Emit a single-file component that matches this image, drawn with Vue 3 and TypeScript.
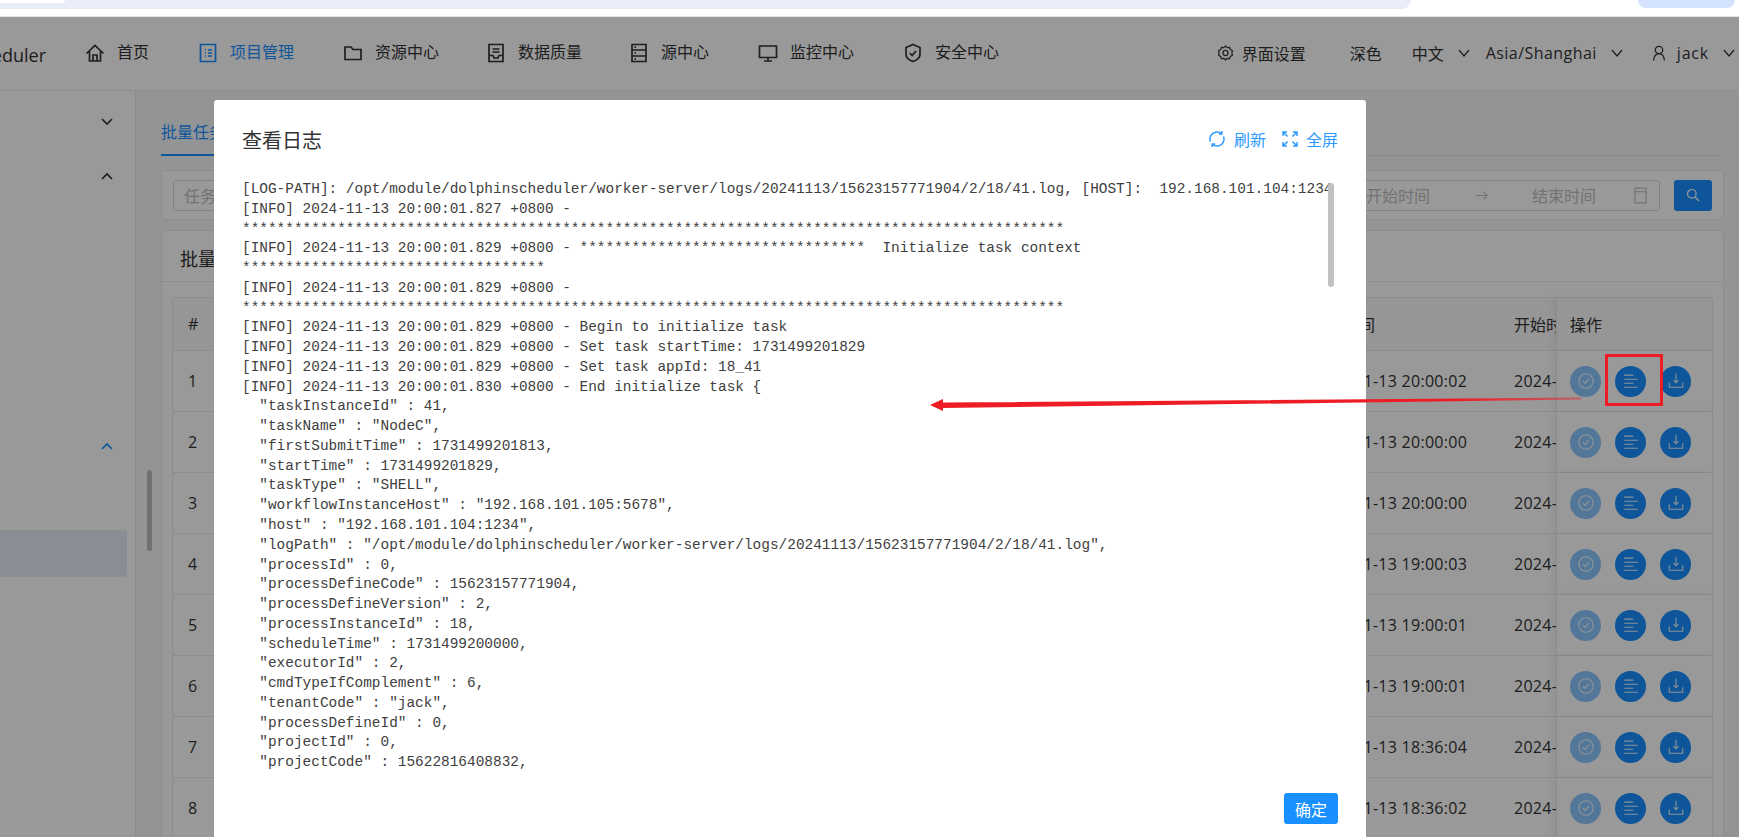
<script setup lang="ts">
interface NavItem { label: string; active?: boolean; tight?: boolean; d: string }

const navItems: NavItem[] = [
  { label: '首页', d: 'M1.500 10.500 10 2.500l8.500 8M4.500 8.500V18h11V8.500M8 18v-6h4v6' },
  { label: '项目管理', active: true, d: 'M2.500 1.500h15v17h-15zM7 7h1M7 10h1M7 13h1M10 7h4M10 10h4M10 13h4' },
  { label: '资源中心', d: 'M2 4h6l2 2.500h8V16.500H2z' },
  { label: '数据质量', tight: true, d: 'M3 1.500h14v17H3zM6.500 6h7M6.500 9h7M3 12.500h4l1 2.500h4l1-2.500h4' },
  { label: '源中心', tight: true, d: 'M3 1.500h14v17H3zM3 7h14M3 13h14M5.500 4.200h1.500M5.500 10h1.500M5.500 15.800h1.500' },
  { label: '监控中心', d: 'M1.500 3h17v11.500h-17zM10 14.500V18M6 18h8' },
  { label: '安全中心', d: 'M10 1.500l7 3v7c0 3.500-3 5.500-7 7-4-1.500-7-3.500-7-7v-7zM6.800 10l2.300 2.500 4-4.500' }
]

const dates = ['20:00:02', '20:00:00', '20:00:00', '19:00:03', '19:00:01', '19:00:01', '18:36:04', '18:36:02']
const rows = dates.map((t, i) => ({ no: i + 1, end: `2024-11-13 ${t}`, start: `2024-11-13 ${t}` }))

const menuRows = [false, true, false, false, false, false, true]
const chevronRows = [0, 1, 6]

const s95 = '*'.repeat(95)
const prefix = '[INFO] 2024-11-13 20:00:01.829 +0800 - '
const logText = [
  '[LOG-PATH]: /opt/module/dolphinscheduler/worker-server/logs/20241113/15623157771904/2/18/41.log, [HOST]:  192.168.101.104:1234',
  '[INFO] 2024-11-13 20:00:01.827 +0800 - ',
  s95,
  prefix + '*'.repeat(33) + '  Initialize task context',
  '*'.repeat(35),
  prefix,
  s95,
  prefix + 'Begin to initialize task',
  prefix + 'Set task startTime: 1731499201829',
  prefix + 'Set task appId: 18_41',
  '[INFO] 2024-11-13 20:00:01.830 +0800 - End initialize task {',
  '  "taskInstanceId" : 41,',
  '  "taskName" : "NodeC",',
  '  "firstSubmitTime" : 1731499201813,',
  '  "startTime" : 1731499201829,',
  '  "taskType" : "SHELL",',
  '  "workflowInstanceHost" : "192.168.101.105:5678",',
  '  "host" : "192.168.101.104:1234",',
  '  "logPath" : "/opt/module/dolphinscheduler/worker-server/logs/20241113/15623157771904/2/18/41.log",',
  '  "processId" : 0,',
  '  "processDefineCode" : 15623157771904,',
  '  "processDefineVersion" : 2,',
  '  "processInstanceId" : 18,',
  '  "scheduleTime" : 1731499200000,',
  '  "executorId" : 2,',
  '  "cmdTypeIfComplement" : 6,',
  '  "tenantCode" : "jack",',
  '  "processDefineId" : 0,',
  '  "projectId" : 0,',
  '  "projectCode" : 15622816408832,'
].join('\n')
</script>

<template>
  <div class="page">
    <div class="chrome">
      <div class="addr"><div class="addr-tab"></div></div>
      <div class="chrome-pill"></div>
    </div>

    <div class="app">
      <header class="topbar">
        <div class="logo"><span>DolphinScheduler</span></div>
        <nav class="nav">
          <a v-for="item in navItems" :key="item.label" class="nav-item" :class="{ active: item.active, tight: item.tight }">
            <svg class="nav-icon" viewBox="0 0 20 20"><path :d="item.d" /></svg>
            <span>{{ item.label }}</span>
          </a>
        </nav>
        <div class="tools">
          <span class="tool tool-set">
            <svg class="tool-icon" viewBox="0 0 20 20">
              <path d="M10 1.800l2 1.900 2.800-.4 1 2.600 2.400 1.500-.8 2.600.8 2.600-2.400 1.500-1 2.600-2.800-.4-2 1.900-2-1.900-2.800.4-1-2.600L1.800 12.600l.8-2.600-.8-2.600 2.400-1.500 1-2.600 2.800.4z" />
              <circle cx="10" cy="10" r="3" />
            </svg>
            界面设置
          </span>
          <span class="tool tool-dark">深色</span>
          <span class="tool tool-lang">中文<svg class="chev" viewBox="0 0 12 8"><path d="M1 1l5 6 5-6" /></svg></span>
          <span class="tool tool-tz">Asia/Shanghai<svg class="chev" viewBox="0 0 12 8"><path d="M1 1l5 6 5-6" /></svg></span>
          <span class="tool tool-user">
            <svg class="user-icon" viewBox="0 0 14 16"><circle cx="7" cy="5" r="3.700" /><path d="M1.500 15.500c.5-4 2.500-6.800 5.500-6.800s5 2.800 5.500 6.800" /></svg>
            <span class="user-name">jack</span><svg class="chev" viewBox="0 0 12 8"><path d="M1 1l5 6 5-6" /></svg>
          </span>
        </div>
      </header>

      <div class="body">
        <aside class="side">
          <div v-for="(open, i) in menuRows" :key="i" class="menu-row">
            <svg v-if="chevronRows.includes(i)" class="menu-chev" :class="{ up: open, blue: i === 6 }" viewBox="0 0 12 8"><path d="M1 1l5 5 5-5" /></svg>
          </div>
          <div class="menu-row"></div>
          <div class="menu-selected"></div>
        </aside>
        <div class="side-track"><div class="side-thumb"></div></div>

        <main class="main">
          <div class="tabs"><span class="tab">批量任务</span></div>

          <section class="card search">
            <div class="input"><span>任务实例名称</span></div>
            <div class="picker">
              <span class="ph">开始时间</span>
              <svg class="pick-arrow" viewBox="0 0 16 12"><path d="M1 6h13M9.500 1.500 14 6l-4.500 4.500" /></svg>
              <span class="ph">结束时间</span>
              <svg class="pick-cal" viewBox="0 0 14 18"><path d="M1 1h12v16H1zM1 5h12" /></svg>
            </div>
            <button class="search-btn" type="button">
              <svg viewBox="0 0 14 14"><circle cx="5.800" cy="5.800" r="4.300" /><path d="M9 9l4 4" /></svg>
            </button>
          </section>

          <section class="card list">
            <div class="list-title">批量任务实例</div>
            <div class="list-body">
              <div class="table">
                <div class="tr th">
                  <div class="c-no">#</div>
                  <div class="c-fill"></div>
                  <div class="c-end">结束时间</div>
                  <div class="c-start">开始时间</div>
                  <div class="c-op">操作</div>
                </div>
                <div v-for="r in rows" :key="r.no" class="tr">
                  <div class="c-no">{{ r.no }}</div>
                  <div class="c-fill"></div>
                  <div class="c-end num">{{ r.end }}</div>
                  <div class="c-start num">{{ r.start }}</div>
                  <div class="c-op">
                    <span class="op disabled">
                      <svg viewBox="0 0 20 20"><circle cx="10" cy="10" r="8" /><path d="M6.500 10.200l2.500 2.500 4.500-5" /></svg>
                    </span>
                    <span class="op">
                      <svg viewBox="0 0 20 20"><path d="M2.500 3.500h10M2.500 8h15M2.500 12.500h10M2.500 17h15" /></svg>
                    </span>
                    <span class="op">
                      <svg viewBox="0 0 20 20"><path d="M10 2v9.500M7.300 9l2.700 3 2.700-3M2.500 11.500V17h15v-5.500" /></svg>
                    </span>
                  </div>
                </div>
              </div>
            </div>
          </section>
        </main>
      </div>

      <div class="mask"></div>

      <div class="modal">
        <div class="modal-head">
          <span class="modal-title">查看日志</span>
          <div class="modal-actions">
            <a class="act">
              <svg viewBox="0 0 18 18"><path d="M2.500 11.500A7 7 0 0 1 3.800 4.300 7 7 0 0 1 13.500 3.500M15.500 6.500a7 7 0 0 1-1.300 7.200 7 7 0 0 1-9.700.8M13.800 1v3h-3M4.200 17v-3h3" /></svg>
              刷新
            </a>
            <a class="act">
              <svg viewBox="0 0 16 16"><path d="M1 1l4.500 4.500M1 5V1h4M15 1l-4.500 4.500M11 1h4v4M1 15l4.500-4.500M1 11v4h4M15 15l-4.500-4.500M15 11v4h-4" /></svg>
              全屏
            </a>
          </div>
        </div>
        <div class="log">
          <pre>{{ logText }}</pre>
          <div class="log-thumb"></div>
        </div>
        <div class="modal-foot">
          <button class="ok" type="button">确定</button>
        </div>
      </div>

      <svg class="annot" viewBox="0 0 1739 820" width="1739" height="820">
        <defs>
          <linearGradient id="arrowFill" gradientUnits="userSpaceOnUse" x1="930" y1="0" x2="1581" y2="0">
            <stop offset="0" stop-color="#ee1c25" />
            <stop offset="0.8" stop-color="#ee1c25" />
            <stop offset="1" stop-color="#ee1c25" stop-opacity="0.45" />
          </linearGradient>
        </defs>
        <path d="M930 388 943 382v3.500L1581 380.500v2L943 391v3z" fill="url(#arrowFill)" />
        <rect x="1606.500" y="338.500" width="55" height="49" fill="none" stroke="#ee1c25" stroke-width="3" />
      </svg>
    </div>
  </div>
</template>

<style>
html, body { margin: 0; padding: 0; background: #fff; overflow: hidden; }
</style>

<style scoped>
.page {
  width: 1739px;
  height: 837px;
  display: flex;
  flex-direction: column;
  overflow: hidden;
  font-family: "Open Sans", "Noto Sans CJK SC", sans-serif;
  font-size: 16px;
  color: #333;
}
.chrome {
  height: 17px;
  box-sizing: border-box;
  flex: none;
  display: flex;
  justify-content: space-between;
  align-items: flex-start;
  background: #fff;
  border-bottom: 1px solid #e4e4e4;
}
.addr {
  width: 1411px;
  height: 9px;
  background: #e9edf7;
  border-radius: 0 0 14px 0;
}
.addr-tab { width: 65px; height: 3px; background: #fff; border-radius: 0 0 8px 0; }
.chrome-pill {
  width: 97px;
  height: 8px;
  margin-right: 4px;
  background: #d3e3fd;
  border-radius: 0 0 12px 12px;
}
.app {
  position: relative;
  flex: 1;
  min-height: 0;
  display: flex;
  flex-direction: column;
  overflow: hidden;
}
.topbar {
  flex: none;
  height: 74px;
  box-sizing: border-box;
  display: flex;
  align-items: center;
  background: #fff;
  border-bottom: 1px solid #ececec;
}
.logo {
  width: 46px;
  overflow: hidden;
  display: flex;
  justify-content: flex-end;
  font-size: 18px;
  white-space: nowrap;
  flex: none;
  padding-top: 2px;
}
.nav { display: flex; gap: 49px; margin-left: 39px; padding-bottom: 4px; }
.nav-item { display: flex; align-items: center; gap: 12px; color: #333; line-height: 22px; }
.nav-item.active { color: #1890ff; }
.nav-item.tight { margin-left: -2px; }
.nav-icon {
  width: 20px;
  height: 20px;
  margin-top: 2px;
  fill: none;
  stroke: currentColor;
  stroke-width: 1.700;
}
.tools { margin-left: auto; display: flex; align-items: center; padding: 0 4px 2px 0; }
.tool { display: flex; align-items: center; white-space: nowrap; }
.tool-icon { width: 17px; height: 18px; fill: none; stroke: #333; stroke-width: 1.400; margin-right: 8px; }
.tool-dark { margin-left: 44px; }
.tool-lang { margin-left: 30px; }
.tool-tz { margin-left: 16px; letter-spacing: 0.45px; }
.tool-user { margin-left: 29px; }
.user-name { letter-spacing: 0.8px; }
.chev { width: 12px; height: 8px; fill: none; stroke: #333; stroke-width: 1.200; margin-left: 14px; }
.user-icon { width: 14px; height: 16px; fill: none; stroke: #333; stroke-width: 1.300; margin-right: 11px; }

.body { flex: 1; min-height: 0; display: flex; }
.side {
  width: 135px;
  flex: none;
  padding-top: 4px;
  background: #fff;
  border-right: 1px solid #ececec;
  box-sizing: content-box;
}
.menu-row {
  height: 54px;
  display: flex;
  align-items: center;
  justify-content: flex-end;
  padding-right: 22px;
}
.menu-chev { width: 12px; height: 8px; fill: none; stroke: #333; stroke-width: 1.600; }
.menu-chev.up { transform: rotate(180deg); }
.menu-chev.blue { stroke: #1890ff; }
.menu-selected {
  width: 127px;
  height: 47px;
  margin-top: 3px;
  background: #e6edf7;
  border-radius: 0 3px 3px 0;
}
.side-track {
  position: relative;
  width: 25px;
  flex: none;
  background: #f6f7fb;
}
.side-thumb {
  position: absolute;
  left: 11px;
  top: 379px;
  width: 5px;
  height: 81px;
  border-radius: 3px;
  background: #bdbdbd;
}
.main {
  flex: 1;
  min-width: 0;
  background: #f6f7fb;
  padding-right: 15px;
  overflow: hidden;
}
.tabs {
  height: 65px;
  display: flex;
  align-items: flex-end;
  border-bottom: 1px solid #e6e6e6;
  box-sizing: border-box;
}
.tab {
  color: #1890ff;
  padding: 0 12px 11px 0;
  line-height: 22px;
  border-bottom: 2px solid #1890ff;
  margin-bottom: -1px;
}
.card {
  background: #fff;
  border: 1px solid #ececec;
  border-radius: 3px;
  box-sizing: border-box;
}
.search {
  margin-top: 14px;
  height: 50px;
  display: flex;
  align-items: center;
  padding: 0 11px;
}
.input {
  width: 200px;
  height: 31px;
  display: flex;
  align-items: center;
  padding-left: 10px;
  box-sizing: border-box;
  border: 1px solid #d9d9d9;
  border-radius: 3px;
  color: #bfbfbf;
}
.picker {
  margin-left: auto;
  width: 340px;
  height: 31px;
  display: flex;
  align-items: center;
  box-sizing: border-box;
  padding-left: 45px;
  border: 1px solid #d9d9d9;
  border-radius: 3px;
  color: #bfbfbf;
}
.ph { width: 64px; flex: none; }
.pick-arrow { width: 14px; height: 11px; fill: none; stroke: #bfbfbf; stroke-width: 1.200; margin: 0 43px 0 45px; }
.pick-cal { width: 13px; height: 17px; fill: none; stroke: #bfbfbf; stroke-width: 1.200; margin-left: 38px; }
.search-btn {
  margin-left: 14px;
  width: 38px;
  height: 31px;
  padding: 0;
  border: 0;
  border-radius: 3px;
  background: #1890ff;
  display: flex;
  align-items: center;
  justify-content: center;
}
.search-btn svg { width: 14px; height: 14px; fill: none; stroke: #fff; stroke-width: 1.200; }
.list { margin-top: 10px; }
.list-title {
  height: 51px;
  box-sizing: border-box;
  padding: 14px 0 0 18px;
  font-size: 18px;
  line-height: 28px;
  border-bottom: 1px solid #ececec;
  white-space: nowrap;
}
.list-body { padding: 15px 10px 0; }
.table { border: 1px solid #ececec; border-radius: 3px; }
.tr {
  height: 61px;
  display: flex;
  align-items: stretch;
  border-bottom: 1px solid #ececec;
  box-sizing: border-box;
}
.tr.th { height: 53px; background: #fafafa; }
.tr > div { display: flex; align-items: center; white-space: nowrap; }
.c-no { width: 40px; padding-left: 15px; box-sizing: border-box; }
.c-fill { flex: 1; }
.c-end { width: 203px; }
.c-start { width: 42px; overflow: hidden; }
.num { letter-spacing: 0.27px; }
.c-op {
  width: 156px;
  flex: none;
  box-sizing: border-box;
  padding-left: 13px;
  gap: 14px;
  background: #fff;
  border-left: 1px solid #ececec;
  box-shadow: -3px 0 6px rgba(0, 0, 0, 0.06);
}
.th .c-op { background: #fafafa; }
.op {
  width: 31px;
  height: 31px;
  border-radius: 50%;
  background: #1890ff;
  display: flex;
  align-items: center;
  justify-content: center;
}
.op svg { width: 18px; height: 18px; fill: none; stroke: #fff; stroke-width: 1.200; opacity: 0.9; }
.op.disabled { opacity: 0.5; }
.mask { position: absolute; inset: 0; background: rgba(0, 0, 0, 0.4); }

.modal {
  position: absolute;
  left: 214px;
  top: 83px;
  width: 1152px;
  height: 745px;
  box-sizing: border-box;
  padding: 24px 32px 21px 28px;
  background: #fff;
  border-radius: 3px;
  display: flex;
  flex-direction: column;
}
.modal-head { display: flex; align-items: center; justify-content: space-between; height: 30px; flex: none; }
.modal-title { font-size: 20px; line-height: 30px; margin-top: 4px; }
.modal-actions { display: flex; gap: 16px; color: #2d9aff; margin-right: -4px; padding-bottom: 1px; }
.act { display: flex; align-items: center; gap: 8px; }
.act svg { fill: none; stroke: currentColor; stroke-width: 1.500; width: 18px; height: 18px; }
.act:last-child svg { width: 16px; height: 16px; }
.log { position: relative; flex: 1; min-height: 0; margin-top: 26px; overflow: hidden; }
.log pre {
  margin: 0;
  font-family: "Liberation Mono", monospace;
  font-size: 14.43px;
  line-height: 19.77px;
  color: #404040;
  white-space: pre;
}
.log-thumb {
  position: absolute;
  right: 0;
  top: 3px;
  width: 6px;
  height: 104px;
  border-radius: 3px;
  background: #c1c1c1;
}
.modal-foot { flex: none; display: flex; justify-content: flex-end; margin-right: -4px; }
.ok {
  width: 54px;
  height: 31px;
  border: 0;
  padding: 0;
  border-radius: 3px;
  background: #1890ff;
  color: #fff;
  font: inherit;
}
.annot { position: absolute; left: 0; top: 0; pointer-events: none; }
</style>
